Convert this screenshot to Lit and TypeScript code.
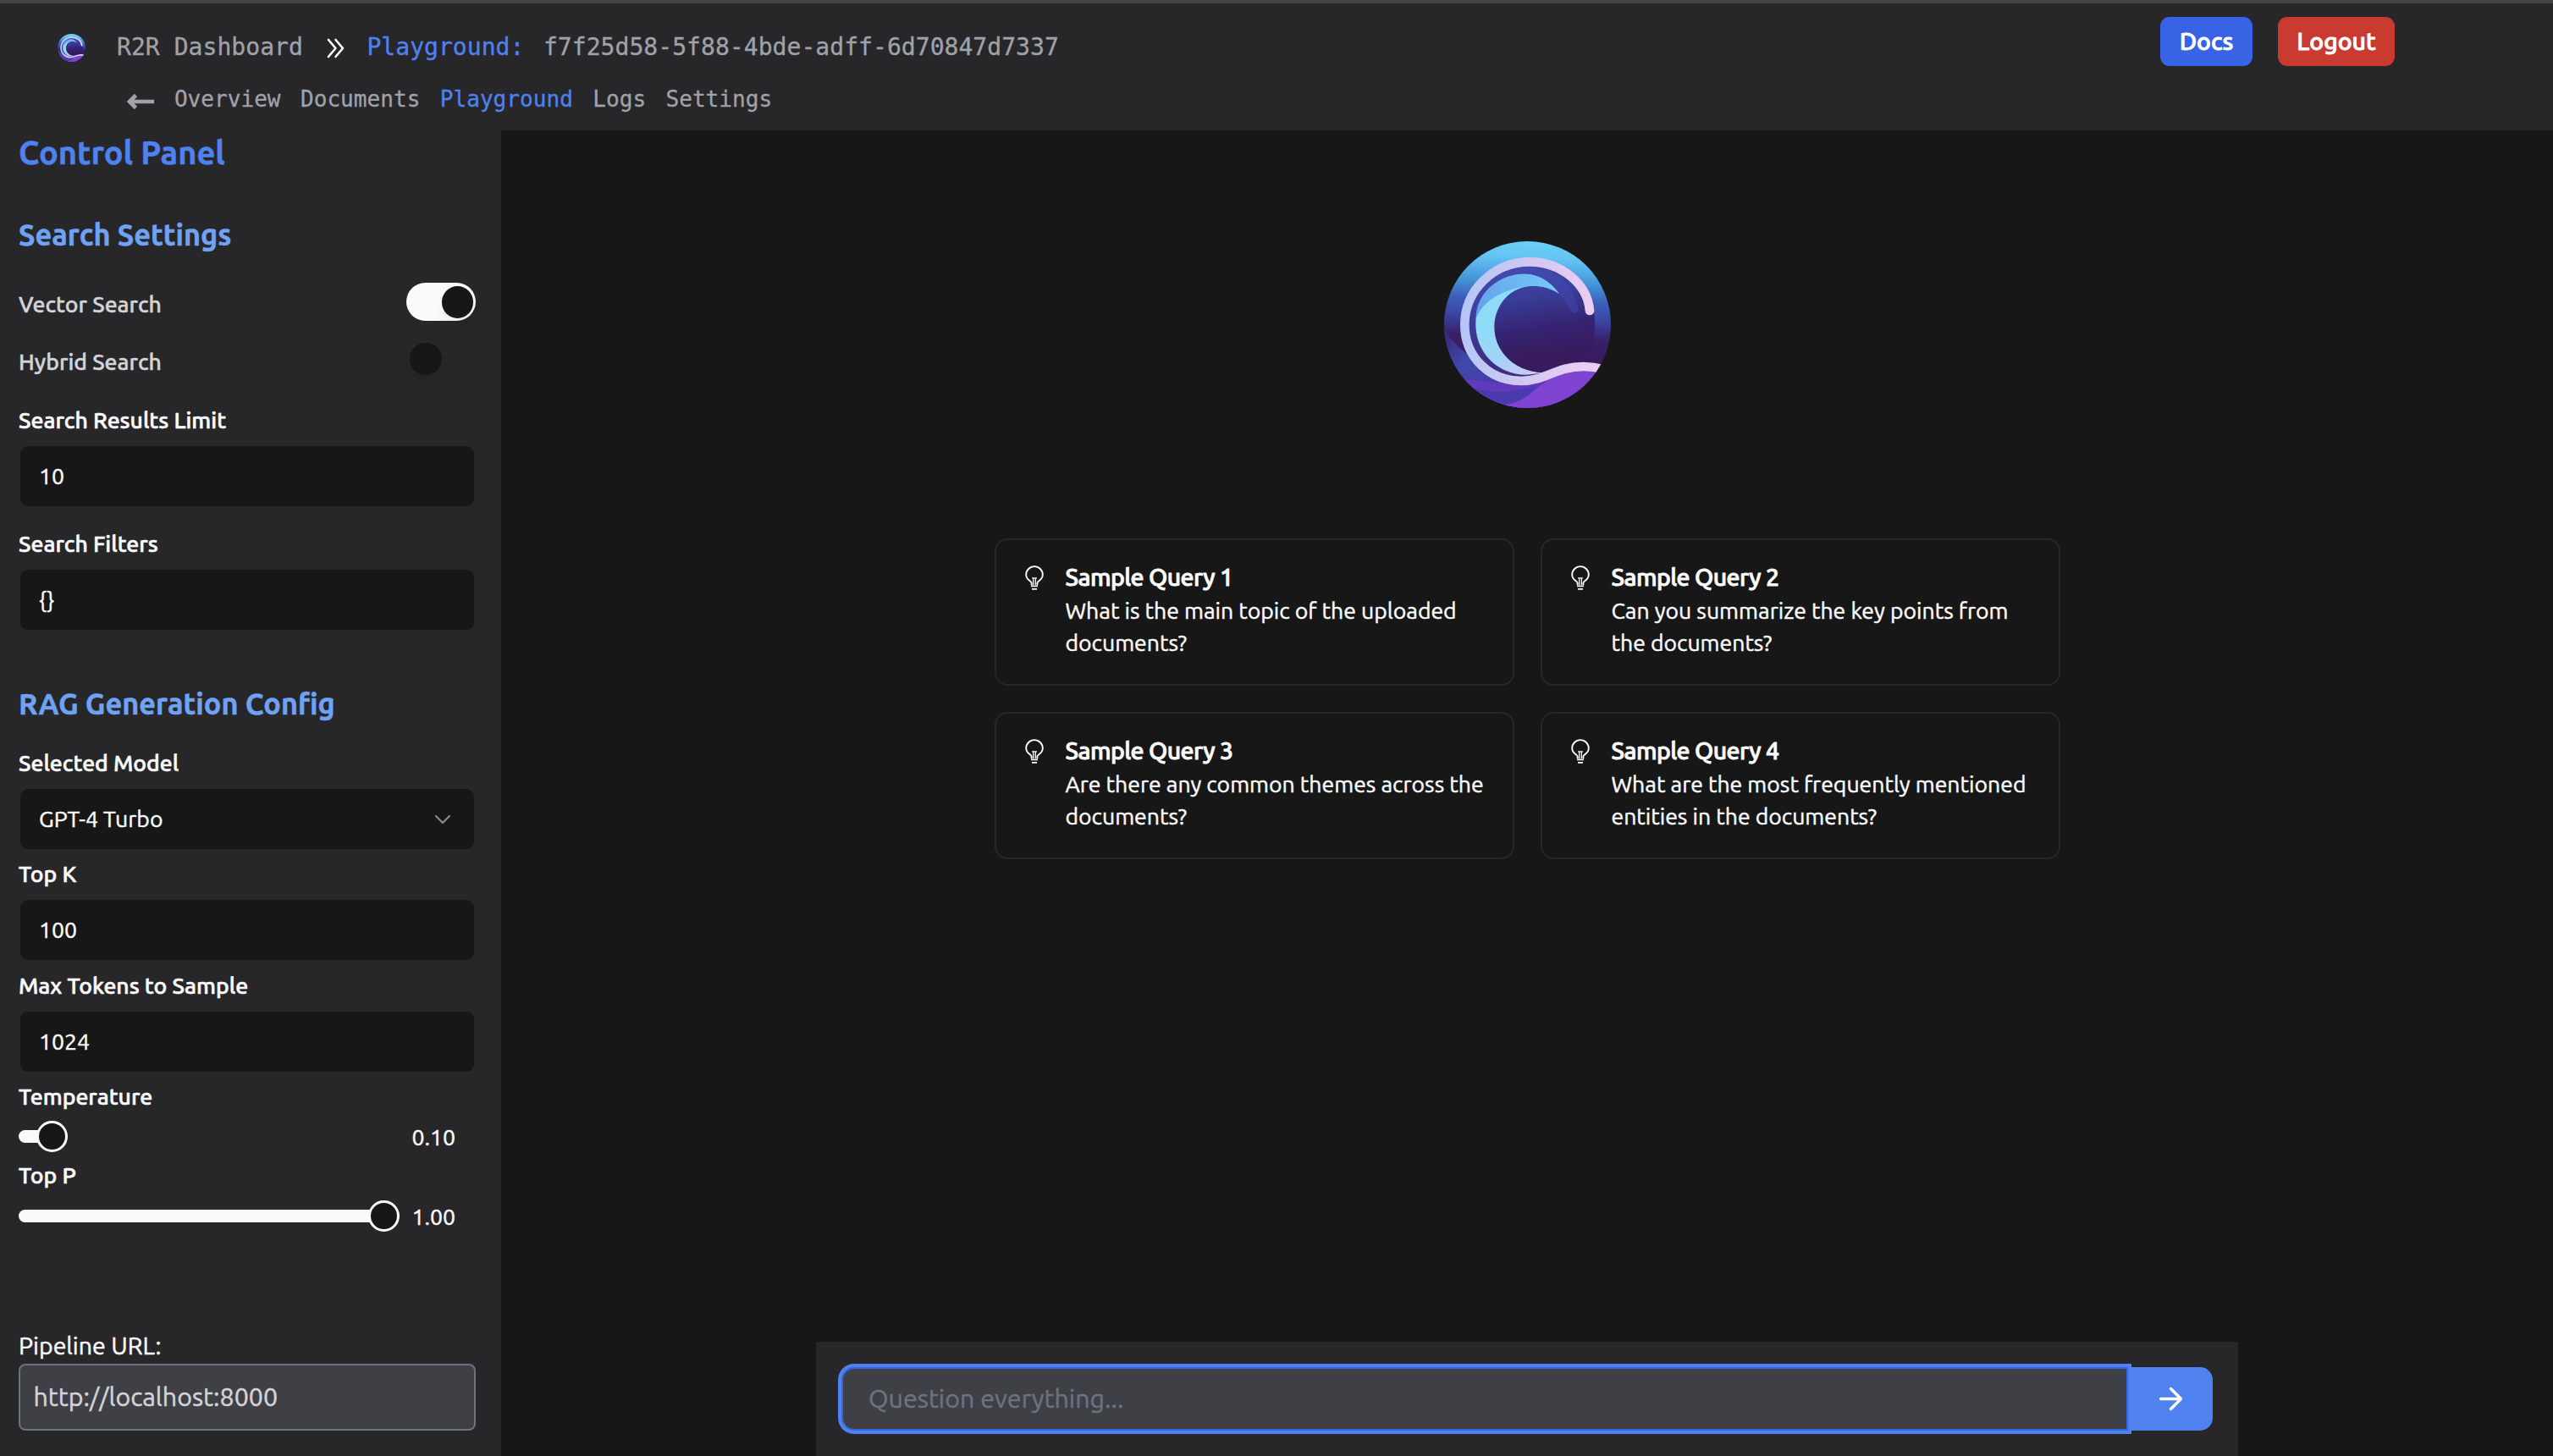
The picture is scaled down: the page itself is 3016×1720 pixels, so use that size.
import { LitElement, html, css, svg } from "lit";
import { customElement, property } from "lit/decorators.js";

@customElement("wave-logo")
class WaveLogo extends LitElement {
  static styles = css`
    :host { display: block; }
    svg { display: block; width: 100%; height: 100%; }
  `;
  render() {
    return html`<svg viewBox="77 76 591 591">
      <defs>
        <clipPath id="disc"><circle cx="372.5" cy="371.5" r="295.5" /></clipPath>
        <linearGradient id="sky" gradientUnits="userSpaceOnUse" x1="400" y1="76" x2="372" y2="667">
          <stop offset="0" stop-color="#69d0f8" />
          <stop offset="0.1" stop-color="#65c4f4" />
          <stop offset="0.24" stop-color="#4596d8" />
          <stop offset="0.36" stop-color="#3c5cb8" />
          <stop offset="0.46" stop-color="#3b44a2" />
          <stop offset="0.58" stop-color="#381f66" />
          <stop offset="0.75" stop-color="#371a5c" />
        </linearGradient>
        <linearGradient id="deep" gradientUnits="userSpaceOnUse" x1="340" y1="160" x2="400" y2="540">
          <stop offset="0" stop-color="#4249b2" />
          <stop offset="0.3" stop-color="#393d98" />
          <stop offset="0.6" stop-color="#352474" />
          <stop offset="0.85" stop-color="#371b5d" />
        </linearGradient>
        <linearGradient id="rim" gradientUnits="userSpaceOnUse" x1="140" y1="300" x2="600" y2="330">
          <stop offset="0" stop-color="#b4c6f6" />
          <stop offset="0.45" stop-color="#cfc8f1" />
          <stop offset="1" stop-color="#ebcdf3" />
        </linearGradient>
        <linearGradient id="foam" gradientUnits="userSpaceOnUse" x1="220" y1="380" x2="400" y2="545">
          <stop offset="0" stop-color="#8edcf7" />
          <stop offset="0.45" stop-color="#a3d2f8" />
          <stop offset="1" stop-color="#cfc9f4" />
        </linearGradient>
        <linearGradient id="crest" gradientUnits="userSpaceOnUse" x1="200" y1="300" x2="470" y2="230">
          <stop offset="0" stop-color="#62a5ea" />
          <stop offset="1" stop-color="#77c6f6" />
        </linearGradient>
        <linearGradient id="tide" gradientUnits="userSpaceOnUse" x1="90" y1="420" x2="230" y2="600">
          <stop offset="0" stop-color="#3a2c80" />
          <stop offset="0.45" stop-color="#3e49aa" />
          <stop offset="1" stop-color="#463ca8" />
        </linearGradient>
      </defs>
      <g clip-path="url(#disc)">
        <rect x="70" y="70" width="605" height="605" fill="url(#sky)" />
        <path d="M77 385C110 450 190 500 260 545L480 560V680H70Z" fill="url(#tide)" />
        <circle cx="388" cy="372" r="224" fill="url(#deep)" />
        <path d="M375 160A212 212 0 0 0 163 372C163 480 250 562 350 562C385 562 410 556 440 545C300 540 190 470 189 370C189 270 265 192 360 192C420 192 460 220 485 262L525 320A14 14 0 0 0 552 310C530 220 460 165 375 160Z" fill="#444bb2" opacity="0.45" />
        <path d="M140 567C230 563 250 585 340 582C420 580 440 550 480 545L500 680H140Z" fill="#5f3abb" />
        <path d="M160 590C230 618 310 617 395 588L480 680H160Z" fill="#4a3aad" />
        <path d="M280 658C370 645 380 610 430 580C490 540 560 522 640 534V680H280Z" fill="#7f43d1" />
        <path d="M485 262C450 215 410 192 360 192C265 192 189 270 189 370C189 470 265 549 370 549L432 542C330 540 255 470 255 380C255 298 315 234 395 234C430 234 460 245 485 262Z" fill="url(#foam)" />
        <path d="M485 262C450 215 410 192 360 192C265 192 189 265 190 350C215 285 290 240 395 234C430 234 460 245 485 262Z" fill="url(#crest)" />
        <path d="M593 322C585 225 490 149 380 149C252 149 150 250 150 372C150 488 240 571 350 571C440 571 470 520 570 520C595 520 615 522 645 530" fill="none" stroke="url(#rim)" stroke-width="32" stroke-linecap="round" />
      </g>
    </svg>`;
  }
}

@customElement("toggle-switch")
class ToggleSwitch extends LitElement {
  @property({ type: Boolean, reflect: true }) on = false;
  static styles = css`
    :host { display: flex; box-sizing: border-box; width: 82px; height: 45px; padding: 4px; border-radius: 23px; background: #292627; }
    :host([on]) { justify-content: flex-end; padding-right: 3px; background: #fafafa; }
    .thumb { width: 37.5px; height: 37.5px; border-radius: 50%; background: #171717; box-shadow: 0 12px 18px -4px rgba(0, 0, 0, 0.08); }
  `;
  render() {
    return html`<span class="thumb"></span>`;
  }
}

@customElement("range-slider")
class RangeSlider extends LitElement {
  @property({ type: Number }) value = 0;
  @property({ type: Number }) max = 1;
  static styles = css`
    :host { display: flex; align-items: center; width: 450px; height: 37px; }
    .track { position: relative; flex: 1; height: 15px; border-radius: 8px; background: #292627; }
    .fill { height: 100%; border-radius: 8px; background: #fafafa; }
    .thumb { position: absolute; top: -11px; box-sizing: border-box; width: 37px; height: 37px; border: 3.8px solid #fafafa; border-radius: 50%; background: #171717; }
  `;
  render() {
    const share = this.value / this.max;
    const left = share * (450 - 37);
    return html`<div class="track">
      <div class="fill" style="width:${left + 18}px"></div>
      <span class="thumb" style="left:${left}px"></span>
    </div>`;
  }
}

const bulb = svg`
  <g fill="none" stroke="#fafafa" stroke-width="1.9">
    <path d="M8.6 23.2V20.6C8.6 18.6 2.2 17 2.2 10.9A9.8 9.8 0 0 1 21.8 10.9C21.8 17 15.4 18.6 15.4 20.6V23.2" />
    <path d="M10.7 23V15.4M13.3 23V15.4M9 14.8H15" stroke-width="1.3" />
    <path d="M8 24.3H16M9 27.9H15" stroke-width="1.8" />
  </g>`;

const queries: [string, string][] = [
  ["Sample Query 1", "What is the main topic of the uploaded documents?"],
  ["Sample Query 2", "Can you summarize the key points from the documents?"],
  ["Sample Query 3", "Are there any common themes across the documents?"],
  ["Sample Query 4", "What are the most frequently mentioned entities in the documents?"],
];

const tabs = ["Overview", "Documents", "Playground", "Logs", "Settings"];

@customElement("app-root")
class AppRoot extends LitElement {
  static styles = css`
    :host {
      display: flex;
      flex-direction: column;
      box-sizing: border-box;
      width: 3016px;
      height: 1720px;
      overflow: hidden;
      background: #171717;
      color: #fafafa;
      font: 400 26.6px/38px Ubuntu, "Noto Sans", sans-serif;
      -webkit-text-stroke: 0.45px currentColor;
    }
    h1, h2, p { margin: 0; }

    .header {
      display: flex;
      align-items: flex-start;
      justify-content: space-between;
      box-sizing: border-box;
      height: 154px;
      flex: none;
      border-top: 4px solid #444444;
      background: #27272a;
      padding: 0 187px 0 67.5px;
      color: #a1a1aa;
      font-family: "DejaVu Sans Mono", monospace;
      -webkit-text-stroke: 0.3px currentColor;
    }
    .crumbs { display: flex; align-items: center; height: 39px; margin-top: 32px; font-size: 28.1px; line-height: 39px; white-space: pre; }
    .brand { width: 33px; height: 33px; margin-right: 37.5px; margin-top: 2px; }
    .chevrons { width: 21px; height: 24px; margin: 3px 26px 0 28.5px; }
    .blue { color: #4f82ef; }
    .id { margin-left: 22.5px; }
    .tabs { display: flex; align-items: center; gap: 23.4px; height: 38px; margin: 23px 0 0 82px; font-size: 26.1px; line-height: 38px; }
    .back { width: 33px; height: 20px; margin: 5px 0 0 0; }
    .actions { display: flex; gap: 30px; margin-top: 16px; font: 500 28.5px/57px Ubuntu, "Noto Sans", sans-serif; color: #fff; -webkit-text-stroke: 0.9px currentColor; }
    .btn { box-sizing: border-box; height: 58px; border-radius: 11px; text-align: center; }
    .docs { width: 109px; background: #3863e4; }
    .logout { width: 138px; background: #c93a30; }

    .body { display: flex; flex: 1; min-height: 0; }
    .panel { display: flex; flex-direction: column; box-sizing: border-box; width: 592px; padding: 0 30px 30px 22px; background: #27272a; }
    h1 { font-size: 38px; line-height: 50px; font-weight: 700; color: #4f82ef; margin-top: 1px; }
    h2 { font-size: 34.3px; line-height: 50px; font-weight: 700; color: #70a2f4; margin-top: 47px; }
    h2.rag { margin-top: 62px; }
    .switch-row { display: flex; justify-content: space-between; align-items: flex-start; height: 45px; margin-top: 32px; font-weight: 500; color: #d4d4d8; }
    .switch-row .name { padding-top: 6px; }
    .switch-row.second { margin-top: 22px; }
    .switch-row.second .name { padding-top: 7px; }
    .label { font-weight: 500; line-height: 38px; -webkit-text-stroke: 0.6px currentColor; }
    .mt31 { margin-top: 31px; }
    .mt25 { margin-top: 25px; }
    .mt26 { margin-top: 26px; }
    .mt10 { margin-top: 10px; }
    .mt11 { margin-top: 11px; }
    .mt8 { margin-top: 8px; }
    .field { display: flex; align-items: center; justify-content: space-between; box-sizing: border-box; height: 71px; margin: 12px 2px 0; padding: 0 27px 2px 22px; border-radius: 9px; background: #171717; }
    .caret { width: 20px; height: 12px; margin-top: 2px; }
    .range { display: flex; align-items: center; height: 37px; margin-top: 10px; }
    .range.top-p { margin-top: 11px; }
    .range .num { margin-left: 14.5px; line-height: 36px; }
    .url-label { margin-top: auto; font-size: 28.5px; line-height: 40px; }
    .url { box-sizing: border-box; height: 79px; margin-top: 2px; padding-left: 15.5px; border: 2px solid #6b7280; border-radius: 8px; background: #3f3f46; color: #d4d4d8; font-size: 30.4px; line-height: 75px; }

    .main { display: flex; flex-direction: column; align-items: center; flex: 1; padding-top: 131px; box-sizing: border-box; }
    .hero { width: 197px; height: 197px; }
    .grid { display: grid; grid-template-columns: 614px 614px; grid-auto-rows: 174px; gap: 31px 31px; margin-top: 154px; }
    .card { display: flex; box-sizing: border-box; padding: 31px 26px 0 33px; border: 2px solid #27272a; border-radius: 15px; }
    .bulb { width: 24px; height: 30px; flex: none; margin: -1px 25px 0 0; }
    .title { font-size: 28.5px; line-height: 30px; font-weight: 500; letter-spacing: -0.6px; margin-top: -3px; -webkit-text-stroke: 0.9px currentColor; }
    .text { width: 500px; margin-top: 7px; line-height: 37.6px; }
    .ask { display: flex; box-sizing: border-box; width: 1680px; height: 135px; margin-top: auto; padding: 30px; background: #27272a; }
    .question { position: relative; box-sizing: border-box; width: 1520px; height: 75px; padding-left: 30px; border: 2px solid #3863e4; border-radius: 15px 0 0 15px; box-shadow: 0 0 0 4px #4f82ef; background: #3f3f46; color: #6b7280; font-size: 30.4px; line-height: 71px; }
    .send { display: flex; align-items: center; justify-content: center; width: 100px; height: 75px; border-radius: 0 15px 15px 0; background: #4f82ef; }
    .send svg { width: 41px; height: 41px; }
  `;

  private card([title, text]: [string, string]) {
    return html`<div class="card">
      <svg class="bulb" viewBox="0 0 24 30">${bulb}</svg>
      <div>
        <div class="title">${title}</div>
        <div class="text">${text}</div>
      </div>
    </div>`;
  }

  render() {
    return html`
      <header class="header">
        <div>
          <div class="crumbs">
            <wave-logo class="brand"></wave-logo><span>R2R Dashboard</span><svg class="chevrons" viewBox="0 0 21 24"><path d="M2 2L10.5 12L2 22M10.5 2L19 12L10.5 22" fill="none" stroke="#fff" stroke-width="2.6" stroke-linecap="round" stroke-linejoin="round" /></svg><span class="blue">Playground:</span><span class="id">f7f25d58-5f88-4bde-adff-6d70847d7337</span>
          </div>
          <nav class="tabs">
            <svg class="back" viewBox="0 0 33 20"><path d="M10.5 2.5L3 10L10.5 17.5M3.5 10H32" fill="none" stroke="#a1a1aa" stroke-width="4.6" /></svg>
            ${tabs.map((t) => html`<span class=${t === "Playground" ? "blue" : ""}>${t}</span>`)}
          </nav>
        </div>
        <div class="actions">
          <div class="btn docs">Docs</div>
          <div class="btn logout">Logout</div>
        </div>
      </header>
      <div class="body">
        <aside class="panel">
          <h1>Control Panel</h1>
          <h2>Search Settings</h2>
          <div class="switch-row"><span class="name">Vector Search</span><toggle-switch on></toggle-switch></div>
          <div class="switch-row second"><span class="name">Hybrid Search</span><toggle-switch></toggle-switch></div>
          <div class="label mt31">Search Results Limit</div>
          <div class="field">10</div>
          <div class="label mt25">Search Filters</div>
          <div class="field">{}</div>
          <h2 class="rag">RAG Generation Config</h2>
          <div class="label mt26">Selected Model</div>
          <div class="field">GPT-4 Turbo<svg class="caret" viewBox="0 0 20 12"><path d="M2 2L10 10L18 2" fill="none" stroke="#8b8b8b" stroke-width="2.2" stroke-linecap="round" stroke-linejoin="round" /></svg></div>
          <div class="label mt10">Top K</div>
          <div class="field">100</div>
          <div class="label mt11">Max Tokens to Sample</div>
          <div class="field">1024</div>
          <div class="label mt10">Temperature</div>
          <div class="range"><range-slider .value=${0.1} .max=${2}></range-slider><span class="num">0.10</span></div>
          <div class="label mt8">Top P</div>
          <div class="range top-p"><range-slider .value=${1}></range-slider><span class="num">1.00</span></div>
          <div class="url-label">Pipeline URL:</div>
          <div class="url">http://localhost:8000</div>
        </aside>
        <main class="main">
          <wave-logo class="hero"></wave-logo>
          <div class="grid">${queries.map((q) => this.card(q))}</div>
          <div class="ask">
            <div class="question">Question everything...</div>
            <div class="send"><svg viewBox="0 0 24 24"><path d="M5 12H19M12 5L19 12L12 19" fill="none" stroke="#fff" stroke-width="2" stroke-linecap="round" stroke-linejoin="round" /></svg></div>
          </div>
        </main>
      </div>
    `;
  }
}
